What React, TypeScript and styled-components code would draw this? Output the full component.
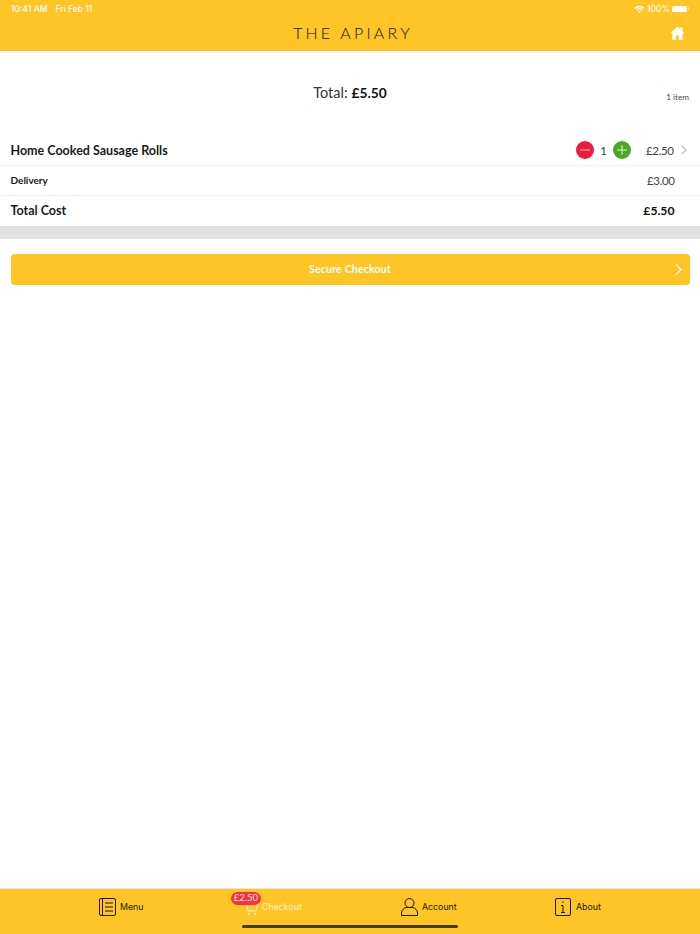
import React from 'react';
import styled, { createGlobalStyle } from 'styled-components';

const Global = createGlobalStyle`
  html, body { margin: 0; padding: 0; background: #fff; }
  body { font-family: Lato, "Open Sans", sans-serif; color: #111; }
`;

const Page = styled.div`
  width: 700px;
  height: 934px;
  display: flex;
  flex-direction: column;
  overflow: hidden;
  position: relative;
`;

const Header = styled.header`
  height: 51px;
  background: #ffc425;
  display: flex;
  flex-direction: column;
  flex-shrink: 0;
`;

const StatusBar = styled.div`
  height: 17px;
  padding: 0 11px;
  display: flex;
  align-items: center;
  justify-content: space-between;
  color: #fff;
  font-family: Inter, sans-serif;
  font-size: 8.5px;
  font-weight: 500;
`;

const StatusLeft = styled.div`
  display: flex;
  gap: 8px;
`;

const StatusRight = styled.div`
  display: flex;
  align-items: center;
  gap: 2px;
`;

const Battery = styled.span`
  width: 15px;
  height: 6px;
  background: #fff;
  border-radius: 1.5px;
  margin-right: 2px;
  position: relative;
  &::after {
    content: '';
    position: absolute;
    right: -2px;
    top: 1.5px;
    width: 1px;
    height: 3px;
    background: #ffe9a8;
  }
`;

const NavBar = styled.div`
  flex: 1;
  display: flex;
  align-items: center;
  justify-content: flex-end;
  padding: 0 15px 2px 0;
  position: relative;
`;

const Title = styled.div`
  position: absolute;
  left: 0;
  right: 0;
  top: 6px;
  padding-left: 6px;
  text-align: center;
  font-family: Lato, sans-serif;
  font-size: 16px;
  font-weight: 300;
  letter-spacing: 3.2px;
  color: #111;
`;

const Summary = styled.section`
  height: 85px;
  padding-bottom: 2px;
  box-sizing: border-box;
  display: flex;
  align-items: center;
  justify-content: center;
  position: relative;
  font-size: 14.5px;
  color: #333;
`;

const SummaryAmount = styled.strong`
  color: #111;
  font-size: 13.8px;
  font-weight: 700;
  margin-left: 4px;
`;

const ItemCount = styled.span`
  position: absolute;
  right: 11px;
  top: 41px;
  font-size: 8.2px;
  color: #444;
`;

const Rows = styled.section`
  border-bottom: 13px solid #e1e1e3;
`;

const Row = styled.div<{ $last?: boolean }>`
  height: 30px;
  box-sizing: border-box;
  padding: 0 10.5px 1px;
  display: flex;
  align-items: center;
  justify-content: space-between;
  border-bottom: ${(p) => (p.$last ? 'none' : '1px solid #f0f0f0')};
`;

const RowLabel = styled.span<{ $size: number }>`
  font-size: ${(p) => p.$size}px;
  font-weight: 700;
  color: #1a1a1a;
`;

const Controls = styled.div`
  display: flex;
  align-items: center;
`;

const Round = styled.span<{ $bg: string }>`
  width: 18px;
  height: 18px;
  border-radius: 50%;
  background: ${(p) => p.$bg};
  display: flex;
  align-items: center;
  justify-content: center;
`;

const Qty = styled.span`
  width: 19px;
  text-align: center;
  font-size: 12px;
  color: #444;
`;

const Price = styled.span<{ $bold?: boolean }>`
  font-size: ${(p) => (p.$bold ? 12.2 : 11.5)}px;
  letter-spacing: ${(p) => (p.$bold ? 0 : -0.4)}px;
  font-weight: ${(p) => (p.$bold ? 700 : 400)};
  color: ${(p) => (p.$bold ? '#111' : '#444')};
  padding-right: 15px;
`;

const LinePrice = styled(Price)`
  margin-left: 15px;
  padding-right: 0;
`;

const RowChevron = styled.svg`
  margin-left: 7px;
  margin-right: 3px;
`;

const CheckoutWrap = styled.div`
  padding: 15px 10.5px 0;
  flex: 1;
`;

const CheckoutButton = styled.button`
  width: 100%;
  height: 31px;
  border: none;
  border-radius: 4px;
  background: #ffc425;
  color: #fff;
  font-family: Lato, sans-serif;
  font-size: 10.5px;
  font-weight: 700;
  letter-spacing: 0.2px;
  position: relative;
  padding: 0 0 2px;
`;

const ButtonChevron = styled.svg`
  position: absolute;
  right: 8px;
  top: 10px;
`;

const TabBar = styled.nav`
  height: 46px;
  box-sizing: border-box;
  flex-shrink: 0;
  background: #ffc425;
  border-top: 1px solid #e6e6e6;
  display: grid;
  grid-template-columns: 242px 153px 157px 148px;
`;

const Tab = styled.div<{ $active?: boolean; $pad: number }>`
  display: flex;
  align-items: flex-start;
  justify-content: flex-start;
  padding: 9px 0 0 ${(p) => p.$pad}px;
  gap: 4px;
  font-family: Inter, sans-serif;
  font-size: 8.8px;
  color: ${(p) => (p.$active ? '#fff3cf' : '#1c1600')};
  position: relative;
`;

const TabText = styled.span`
  line-height: 18px;
`;

const AboutText = styled(TabText)`
  margin-left: 1px;
`;

const Badge = styled.span`
  position: absolute;
  left: -11px;
  top: 3px;
  width: 30px;
  height: 12.5px;
  border-radius: 7px;
  background: #f5333f;
  color: #ffe3dc;
  font-family: Lato, sans-serif;
  font-size: 9.5px;
  line-height: 12.5px;
  text-align: center;
`;

const HomeIndicator = styled.div`
  position: absolute;
  left: 242px;
  bottom: 6px;
  width: 216px;
  height: 3.5px;
  border-radius: 2px;
  background: #46390f;
`;

const Minus = () => (
  <svg width="12" height="12" viewBox="0 0 12 12">
    <path d="M1 6h10" stroke="#f9c9cf" strokeWidth="1" />
  </svg>
);

const Plus = () => (
  <svg width="12" height="12" viewBox="0 0 12 12">
    <path d="M1 6h10M6 1v10" stroke="#e4f3dc" strokeWidth="1" />
  </svg>
);

const tabIconProps = { fill: 'none', stroke: '#1c1600', strokeWidth: 1 };

export default function App() {
  return (
    <Page>
      <Global />
      <Header>
        <StatusBar>
          <StatusLeft>
            <span>10:41 AM</span>
            <span>Fri Feb 11</span>
          </StatusLeft>
          <StatusRight>
            <svg width="11" height="8" viewBox="0 0 11 8">
              <path d="M0.3 2.8a7.4 7.4 0 0 1 10.4 0L9.7 3.9a6 6 0 0 0-8.4 0zM2.2 4.7a4.7 4.7 0 0 1 6.6 0L7.8 5.7a3.3 3.3 0 0 0-4.6 0zM4 6.5a2 2 0 0 1 3 0L5.5 8z" fill="#fff" />
            </svg>
            <span>100%</span>
            <Battery />
          </StatusRight>
        </StatusBar>
        <NavBar>
          <Title>THE APIARY</Title>
          <svg width="15" height="14" viewBox="0 0 15 14">
            <path d="M7.5 0.5 0.3 7.2h2.1V14h3.7V9.4h2.8V14h3.7V7.2h2.1L12.4 5V1.2h-2v2z" fill="#fff" />
          </svg>
        </NavBar>
      </Header>

      <Summary>
        Total:<SummaryAmount>£5.50</SummaryAmount>
        <ItemCount>1 item</ItemCount>
      </Summary>

      <Rows>
        <Row>
          <RowLabel $size={12.5}>Home Cooked Sausage Rolls</RowLabel>
          <Controls>
            <Round $bg="#ec1c3a"><Minus /></Round>
            <Qty>1</Qty>
            <Round $bg="#4ca71e"><Plus /></Round>
            <LinePrice>£2.50</LinePrice>
            <RowChevron width="6" height="10" viewBox="0 0 6 10">
              <path d="M1 1l4 4-4 4" fill="none" stroke="#bdbdbd" strokeWidth="1.2" />
            </RowChevron>
          </Controls>
        </Row>
        <Row>
          <RowLabel $size={10}>Delivery</RowLabel>
          <Price>£3.00</Price>
        </Row>
        <Row $last>
          <RowLabel $size={12.5}>Total Cost</RowLabel>
          <Price $bold>£5.50</Price>
        </Row>
      </Rows>

      <CheckoutWrap>
        <CheckoutButton>
          Secure Checkout
          <ButtonChevron width="7" height="11" viewBox="0 0 7 11">
            <path d="M1 0.5l5 5-5 5" fill="none" stroke="#fff" strokeWidth="1.2" />
          </ButtonChevron>
        </CheckoutButton>
      </CheckoutWrap>

      <TabBar>
        <Tab $pad={99}>
          <svg width="17" height="18" viewBox="0 0 17 18" {...tabIconProps}>
            <rect x="0.5" y="0.5" width="16" height="17" rx="1.5" />
            <path d="M3.5 0.5v17M6 5h8M6 9h8M6 13h8" />
          </svg>
          <TabText>Menu</TabText>
        </Tab>
        <Tab $pad={4} $active>
          <Badge>£2.50</Badge>
          <svg width="12" height="18" viewBox="0 0 12 18" fill="none" stroke="#fff3cf" strokeWidth="1">
            <path d="M0.5 6.5h11l-1.5 6.5H2z" />
            <circle cx="3" cy="16" r="0.8" fill="#fff3cf" />
            <circle cx="9" cy="16" r="0.8" fill="#fff3cf" />
          </svg>
          <TabText>Checkout</TabText>
        </Tab>
        <Tab $pad={6}>
          <svg width="17" height="18" viewBox="0 0 17 18" {...tabIconProps}>
            <ellipse cx="8.5" cy="5" rx="4.5" ry="4.5" />
            <path d="M0.5 17.5v-2.5c0-3 2.5-5 4.5-5.5h7c2 0.5 4.5 2.5 4.5 5.500v2.500z" />
          </svg>
          <TabText>Account</TabText>
        </Tab>
        <Tab $pad={3}>
          <svg width="16" height="18" viewBox="0 0 16 18" {...tabIconProps}>
            <rect x="0.5" y="0.5" width="15" height="17" rx="1.5" />
            <path d="M6 7.5h2v7M6 14.5h4M8 3.5v1.5" />
          </svg>
          <AboutText>About</AboutText>
        </Tab>
      </TabBar>
      <HomeIndicator />
    </Page>
  );
}
